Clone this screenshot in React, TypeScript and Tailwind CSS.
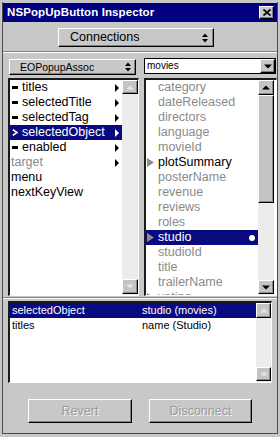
import React from "react";

const font = "font-['Liberation_Sans',Arial,Helvetica,sans-serif]";

function UpDown() {
  return (
    <svg width="6" height="10" viewBox="0 0 6 10">
      <polygon points="0,4 6,4 3,0.5" fill="#000" />
      <polygon points="0,6 6,6 3,9.5" fill="#000" />
    </svg>
  );
}

function Tri({ dir, fill }: { dir: "up" | "down"; fill: string }) {
  return (
    <svg width="8" height="5" viewBox="0 0 8 5">
      {dir === "up" ? (
        <polygon points="0,4.5 8,4.5 4,0.5" fill={fill} />
      ) : (
        <polygon points="0,0.5 8,0.5 4,4.5" fill={fill} />
      )}
    </svg>
  );
}

function RightArrow({ fill }: { fill: string }) {
  return (
    <svg width="4" height="8" viewBox="0 0 4 8">
      <polygon points="0,0 4,4 0,8" fill={fill} />
    </svg>
  );
}

function GrayTri() {
  return (
    <svg width="7" height="9" viewBox="0 0 7 9">
      <polygon points="0,0 7,4.5 0,9" fill="#8c8c8c" />
    </svg>
  );
}

function ScrollBtn({
  dir,
  disabled,
  className,
}: {
  dir: "up" | "down";
  disabled?: boolean;
  className: string;
}) {
  return (
    <div
      className={`${className} flex items-center justify-center bg-[#c4c4c4] border-t border-l border-white border-r border-b border-r-black border-b-black shadow-[inset_-1px_-1px_0_#8a8a8a]`}
    >
      <Tri dir={dir} fill={disabled ? "#e6e6e6" : "#000"} />
    </div>
  );
}

const leftRows: {
  t: string;
  m?: "dash" | "chev";
  a?: boolean;
  sel?: boolean;
  gray?: boolean;
}[] = [
  { t: "titles", m: "dash", a: true },
  { t: "selectedTitle", m: "dash", a: true },
  { t: "selectedTag", m: "dash", a: true },
  { t: "selectedObject", m: "chev", a: true, sel: true },
  { t: "enabled", m: "dash", a: true },
  { t: "target", a: true, gray: true },
  { t: "menu" },
  { t: "nextKeyView" },
];

const rightRows: { t: string; tri?: boolean; black?: boolean; sel?: boolean }[] = [
  { t: "category" },
  { t: "dateReleased" },
  { t: "directors" },
  { t: "language" },
  { t: "movieId" },
  { t: "plotSummary", tri: true, black: true },
  { t: "posterName" },
  { t: "revenue" },
  { t: "reviews" },
  { t: "roles" },
  { t: "studio", tri: true, sel: true },
  { t: "studioId" },
  { t: "title" },
  { t: "trailerName" },
  { t: "voting", tri: true },
];

export default function App() {
  return (
    <div
      className={`${font} w-[280px] h-[437px] bg-[#c8c8c8] pt-[2px] px-[2px] pb-[3px] select-none overflow-hidden`}
    >
      <div className="h-[432px] border-l border-r border-b border-[#4a4a4a] pt-[1px] flex flex-col">
        {/* Title bar */}
        <div className="h-[19px] bg-[#000080] flex items-center justify-between pl-[4px] pr-[3px]">
          <span className="text-white font-bold text-[11.5px] leading-none tracking-[0.1px]">
            NSPopUpButton Inspector
          </span>
          <div className="w-[15px] h-[13px] bg-[#c8c8c8] border-t border-l border-white border-r border-b border-r-black border-b-black shadow-[inset_-1px_-1px_0_#808080] flex items-center justify-center">
            <svg width="8" height="7" viewBox="0 0 8 7">
              <path d="M0.5 0.5 L7.5 6.5 M7.5 0.5 L0.5 6.5" stroke="#000" strokeWidth="1.7" />
            </svg>
          </div>
        </div>

        {/* Connections popup */}
        <div className="mt-[6px] ml-[55px] w-[156px] h-[19px] bg-[#c8c8c8] border-t border-l border-white border-r border-b border-r-black border-b-black shadow-[inset_-1px_-1px_0_#808080] flex items-center pl-[11px] pr-[5px]">
          <span className="text-[12.5px] text-black leading-none">Connections</span>
          <span className="ml-auto flex items-center">
            <UpDown />
          </span>
        </div>

        {/* Separator */}
        <div className="mt-[4px] h-[1px] bg-[#808080]" />
        <div className="h-[1px] bg-white" />

        {/* Columns */}
        <div className="flex pl-[5px] gap-[5px]">
          {/* Left column */}
          <div className="flex flex-col w-[131px]">
            <div className="mt-[6px] ml-[1px] w-[127px] h-[16px] bg-[#c8c8c8] border-t border-l border-white border-r border-b border-r-black border-b-black shadow-[inset_-1px_-1px_0_#808080] flex items-center pl-[10px] pr-[4px]">
              <span className="text-[10.5px] text-black leading-none">EOPopupAssoc</span>
              <span className="ml-auto flex items-center">
                <UpDown />
              </span>
            </div>
            <div className="mt-[3px] h-[218px] border-t-2 border-l-2 border-t-[#1a1a1a] border-l-[#1a1a1a] border-r border-b border-r-white border-b-white bg-white flex">
              <div className="w-[112px] flex flex-col">
                {leftRows.map((r) => (
                  <div
                    key={r.t}
                    className={`h-[15px] flex items-center ${
                      r.sel ? "bg-[#0a0a80] -ml-[1px] pl-[3px]" : r.m ? "pl-[2px]" : "pl-[1px]"
                    } pr-[3px]`}
                  >
                    {r.m === "dash" && <div className="w-[6px] h-[3px] bg-black" />}
                    {r.m === "chev" && (
                      <svg width="6" height="7" viewBox="0 0 6 7">
                        <polyline points="0.8,0.6 5,3.5 0.8,6.4" fill="none" stroke="#fff" strokeWidth="1.6" />
                      </svg>
                    )}
                    <span
                      className={`${r.m ? "ml-[4px]" : ""} text-[12.5px] leading-[15px] ${
                        r.sel ? "text-white" : r.gray ? "text-[#8a8a8a]" : "text-black"
                      }`}
                    >
                      {r.t}
                    </span>
                    {r.a && (
                      <span className="ml-auto flex items-center">
                        <RightArrow fill={r.sel ? "#fff" : "#000"} />
                      </span>
                    )}
                  </div>
                ))}
              </div>
              <div className="w-[16px] flex flex-col bg-[#ececec]">
                <ScrollBtn dir="up" disabled className="h-[14px]" />
                <div className="flex-1" />
                <ScrollBtn dir="down" disabled className="h-[15px] mb-[1px]" />
              </div>
            </div>
          </div>

          {/* Right column */}
          <div className="flex flex-col w-[133px]">
            <div className="mt-[5px] w-[132px] h-[16px] bg-white border border-black flex items-center">
              <span className="pl-[2px] text-[10px] text-black leading-none">movies</span>
              <div className="ml-auto w-[15px] h-[14px] bg-[#c8c8c8] border-t border-l border-white border-r border-b border-r-black border-b-black shadow-[inset_-1px_-1px_0_#808080] flex items-center justify-center">
                <Tri dir="down" fill="#000" />
              </div>
            </div>
            <div className="mt-[4px] h-[218px] border-t-2 border-l-2 border-t-[#1a1a1a] border-l-[#1a1a1a] border-r border-b border-r-white border-b-white bg-white flex">
              <div className="w-[112px] flex flex-col overflow-hidden">
                {rightRows.map((r) => (
                  <div
                    key={r.t}
                    className={`h-[15px] shrink-0 flex items-center ${
                      r.sel ? "bg-[#0a0a80]" : ""
                    } pr-[3px]`}
                  >
                    <span className="w-[7px] ml-[1px] flex items-center">{r.tri && <GrayTri />}</span>
                    <span
                      className={`ml-[4px] text-[12.5px] leading-[15px] ${
                        r.sel ? "text-white" : r.black ? "text-black" : "text-[#8a8a8a]"
                      }`}
                    >
                      {r.t}
                    </span>
                    {r.sel && <span className="ml-auto w-[6px] h-[6px] rounded-full bg-white" />}
                  </div>
                ))}
              </div>
              <div className="w-[16px] flex flex-col bg-[#ececec]">
                <ScrollBtn dir="up" className="h-[15px]" />
                <div className="h-[108px] bg-[#c4c4c4] border-t border-l border-white border-r border-b border-r-black border-b-black shadow-[inset_-1px_-1px_0_#8a8a8a]" />
                <div className="flex-1" />
                <ScrollBtn dir="down" className="h-[14px] mb-[1px]" />
              </div>
            </div>
          </div>
        </div>

        {/* Separator */}
        <div className="mt-[1px] h-[1px] bg-[#808080]" />
        <div className="h-[1px] bg-white" />

        {/* Table */}
        <div className="mt-[2px] ml-[5px] w-[264px] h-[82px] border-t-2 border-l-2 border-t-[#1a1a1a] border-l-[#1a1a1a] border-r border-b border-r-white border-b-white bg-white flex">
          <div className="w-[247px] flex flex-col">
            <div className="h-[15px] bg-[#0a0a80] flex items-center text-white text-[11px] leading-[15px] -ml-[1px]">
              <span className="w-[133px] pl-[3px]">selectedObject</span>
              <span>studio (movies)</span>
            </div>
            <div className="h-[15px] flex items-center text-black text-[11px] leading-[15px] -ml-[1px]">
              <span className="w-[133px] pl-[3px]">titles</span>
              <span>name (Studio)</span>
            </div>
          </div>
          <div className="w-[15px] flex flex-col bg-[#ececec]">
            <ScrollBtn dir="up" disabled className="h-[15px]" />
            <div className="flex-1" />
            <ScrollBtn dir="down" disabled className="h-[14px] mb-[1px]" />
          </div>
        </div>

        {/* Buttons */}
        <div className="mt-[16px] flex pl-[25px] gap-[17px]">
          <div className="w-[104px] h-[24px] bg-[#c8c8c8] border-t border-l border-white border-r border-b border-r-black border-b-black shadow-[inset_-1px_-1px_0_#808080] flex items-center justify-center">
            <span className="text-[12.5px] text-[#9a9a9a] [text-shadow:1px_1px_0_#f4f4f4]">Revert</span>
          </div>
          <div className="w-[103px] h-[24px] bg-[#c8c8c8] border-t border-l border-white border-r border-b border-r-black border-b-black shadow-[inset_-1px_-1px_0_#808080] flex items-center justify-center">
            <span className="text-[12.5px] text-[#9a9a9a] [text-shadow:1px_1px_0_#f4f4f4]">Disconnect</span>
          </div>
        </div>
      </div>
    </div>
  );
}
